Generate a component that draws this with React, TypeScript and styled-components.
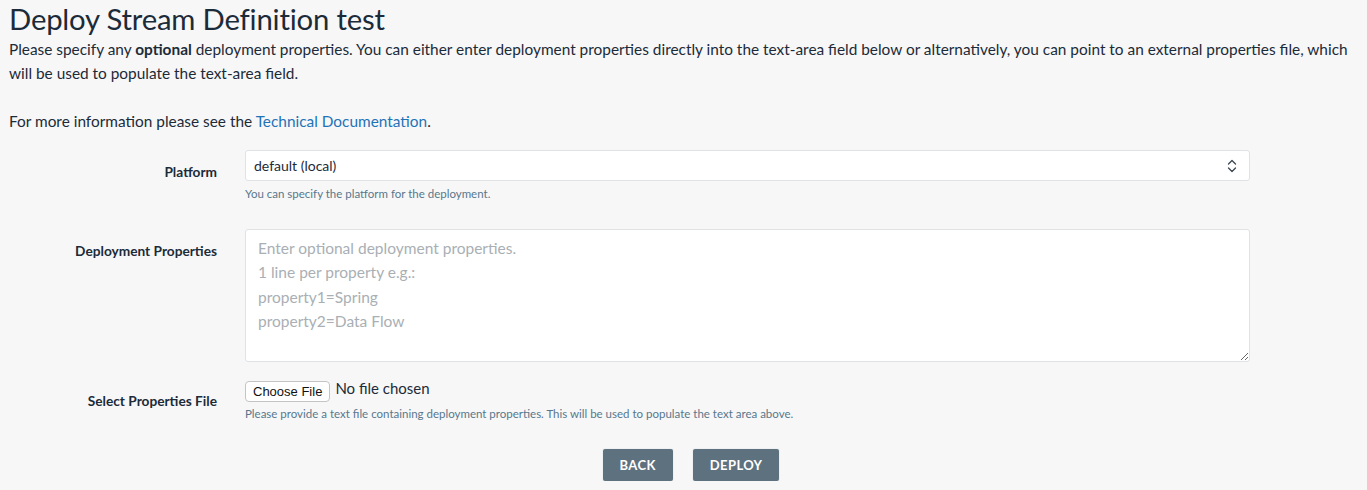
import React from "react";
import styled, { createGlobalStyle } from "styled-components";

const GlobalStyle = createGlobalStyle`
  html, body { margin: 0; padding: 0; }
  body {
    background: #f7f7f7;
    font-family: Lato, "Noto Sans", sans-serif;
    color: #1c2b39;
  }
  * { box-sizing: border-box; }
`;

const Page = styled.div`
  padding: 0 9px;
`;

const Title = styled.h1`
  margin: 0;
  font-size: 29.3px;
  font-weight: 400;
  line-height: 37px;
  color: #1c2b39;
  letter-spacing: -0.2px;
`;

const Intro = styled.p<{ $after: number }>`
  margin: 0 0 ${(p) => p.$after}px;
  font-size: 15.4px;
  line-height: 24px;
`;

const Strong = styled.strong`
  font-weight: 700;
`;

const Link = styled.a`
  color: #1f73b7;
  text-decoration: none;
`;

const Form = styled.div`
  margin-top: 17px;
  display: flex;
  flex-direction: column;
`;

const Row = styled.div<{ $gap: number }>`
  display: grid;
  grid-template-columns: 208px 1005px;
  column-gap: 28px;
  margin-bottom: ${(p) => p.$gap}px;
`;

const Label = styled.div<{ $top: number }>`
  text-align: right;
  font-size: 13.7px;
  font-weight: 700;
  line-height: 20px;
  padding-top: ${(p) => p.$top}px;
  color: #1c2b39;
`;

const Control = styled.div`
  display: flex;
  flex-direction: column;
`;

const Select = styled.div`
  height: 31px;
  background: #fff;
  border: 1px solid #dfe3e6;
  border-radius: 3px;
  display: flex;
  align-items: center;
  justify-content: space-between;
  padding: 0 12px 0 8px;
  font-size: 14px;
  color: #1c2b39;
`;

const Help = styled.div<{ $top: number }>`
  margin-top: ${(p) => p.$top}px;
  font-size: 11.5px;
  line-height: 16px;
  color: #57778d;
`;

const TextArea = styled.textarea`
  display: block;
  width: 100%;
  height: 133px;
  background: #fff;
  border: 1px solid #dfe3e6;
  border-radius: 3px;
  padding: 6px 12px;
  font-family: Lato, "Noto Sans", sans-serif;
  font-size: 15.5px;
  line-height: 24.3px;
  color: #1c2b39;
  outline: none;
  &::placeholder {
    color: #a9afb4;
  }
`;

const FileLine = styled.div`
  display: flex;
  align-items: flex-start;
  gap: 5px;
  height: 20px;
`;

const FileButton = styled.button`
  height: 21px;
  padding: 0 7px;
  background: #fff;
  border: 1px solid #c4c4c4;
  border-radius: 4px;
  font-family: "Liberation Sans", Arial, sans-serif;
  font-size: 13px;
  color: #111;
  line-height: 19px;
`;

const FileStatus = styled.span`
  font-size: 15px;
  line-height: 14px;
  color: #1c2b39;
`;

const Actions = styled.div`
  display: flex;
  justify-content: center;
  gap: 20px;
  padding-left: 15px;
  margin-top: 27px;
`;

const ActionButton = styled.button`
  height: 32px;
  padding: 0 17px;
  background: #5e717e;
  color: #fff;
  border: none;
  border-radius: 2px;
  font-family: Lato, "Noto Sans", sans-serif;
  font-size: 13px;
  font-weight: 700;
  letter-spacing: 0.4px;
  text-transform: uppercase;
  box-shadow: 0 0 0 1px #eef0f1;
`;

const Chevrons = () => (
  <svg width="10" height="14" viewBox="0 0 10 14" fill="none" stroke="#3a4753" strokeWidth="1.3" strokeLinecap="round" strokeLinejoin="round">
    <path d="M1.5 5 L5 1.5 L8.5 5" />
    <path d="M1.5 9 L5 12.5 L8.5 9" />
  </svg>
);

export default function App() {
  return (
    <Page>
      <GlobalStyle />
      <Title>Deploy Stream Definition test</Title>
      <Intro $after={24}>
        Please specify any <Strong>optional</Strong> deployment properties. You can either enter deployment properties directly
        into the text-area field below or alternatively, you can point to an external properties file, which will be used
        to populate the text-area field.
      </Intro>
      <Intro $after={0}>
        For more information please see the <Link href="#">Technical Documentation</Link>.
      </Intro>
      <Form>
        <Row $gap={27}>
          <Label $top={12}>Platform</Label>
          <Control>
            <Select>
              <span>default (local)</span>
              <Chevrons />
            </Select>
            <Help $top={5}>You can specify the platform for the deployment.</Help>
          </Control>
        </Row>
        <Row $gap={19}>
          <Label $top={12}>Deployment Properties</Label>
          <Control>
            <TextArea
              placeholder={"Enter optional deployment properties.\n1 line per property e.g.:\nproperty1=Spring\nproperty2=Data Flow"}
            />
          </Control>
        </Row>
        <Row $gap={0}>
          <Label $top={10}>Select Properties File</Label>
          <Control>
            <FileLine>
              <FileButton>Choose File</FileButton>
              <FileStatus>No file chosen</FileStatus>
            </FileLine>
            <Help $top={5}>
              Please provide a text file containing deployment properties. This will be used to populate the text area above.
            </Help>
          </Control>
        </Row>
        <Actions>
          <ActionButton>Back</ActionButton>
          <ActionButton>Deploy</ActionButton>
        </Actions>
      </Form>
    </Page>
  );
}
